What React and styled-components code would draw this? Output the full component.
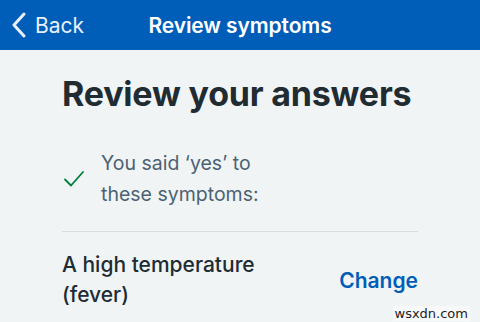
import React from 'react'
import styled, { createGlobalStyle } from 'styled-components'

const Global = createGlobalStyle`
  html, body { margin: 0; padding: 0; }
  body {
    width: 480px;
    height: 322px;
    overflow: hidden;
    background: #f0f4f5;
    font-family: Inter, "Noto Sans", sans-serif;
  }
`

const Page = styled.div`
  width: 480px;
  height: 322px;
  position: relative;
  background: #f0f4f5;
`

const Header = styled.header`
  height: 50px;
  background: #005eb8;
  display: grid;
  grid-template-columns: 1fr auto 1fr;
  align-items: center;
  color: #fff;
`

const Back = styled.div`
  display: flex;
  align-items: center;
  gap: 8px;
  padding-left: 11px;
  font-size: 21px;
  font-weight: 400;
  color: #e8f1fb;
  svg { display: block; }
`

const HeaderTitle = styled.div`
  font-size: 21px;
  font-weight: 600;
  letter-spacing: -0.1px;
`

const Content = styled.main`
  padding: 22px 62px 0 62px;
`

const Title = styled.h1`
  margin: 0;
  font-size: 34px;
  font-weight: 700;
  color: #212b32;
  letter-spacing: -0.2px;
  line-height: 44px;
`

const Summary = styled.div`
  display: flex;
  align-items: center;
  gap: 16px;
  margin-top: 32px;
  padding-bottom: 21px;
  border-bottom: 1px solid #d8dde0;
  svg { display: block; margin-left: 1px; }
`

const SummaryText = styled.p`
  margin: 0;
  font-size: 19.5px;
  line-height: 31px;
  color: #4c6272;
  font-weight: 400;
`

const Row = styled.div`
  display: flex;
  align-items: center;
  justify-content: space-between;
  padding-top: 18px;
`

const Symptom = styled.div`
  font-size: 21px;
  line-height: 30px;
  font-weight: 500;
  color: #212b32;
`

const ChangeLink = styled.a`
  font-size: 21px;
  font-weight: 600;
  color: #005eb8;
  text-decoration: none;
`

const Watermark = styled.span`
  position: absolute;
  right: 10px;
  bottom: 1px;
  font-size: 13px;
  color: #222;
  background: #f8f8f8;
  padding: 0 2px;
  font-family: "DejaVu Sans", sans-serif;
`

export default function App() {
  return (
    <Page>
      <Global />
      <Header>
        <Back>
          <svg width="16" height="26" viewBox="0 0 16 26">
            <path d="M13 2 L3 13 L13 24" fill="none" stroke="#e8f1fb" strokeWidth="3" strokeLinecap="round" strokeLinejoin="round" />
          </svg>
          Back
        </Back>
        <HeaderTitle>Review symptoms</HeaderTitle>
        <div />
      </Header>
      <Content>
        <Title>Review your answers</Title>
        <Summary>
          <svg width="22" height="18" viewBox="0 0 22 18">
            <path d="M2 9.5 L8 15.5 L20 2" fill="none" stroke="#007f3b" strokeWidth="1.8" strokeLinecap="round" strokeLinejoin="round" />
          </svg>
          <SummaryText>You said ‘yes’ to<br />these symptoms:</SummaryText>
        </Summary>
        <Row>
          <Symptom>A high temperature<br />(fever)</Symptom>
          <ChangeLink href="#">Change</ChangeLink>
        </Row>
      </Content>
      <Watermark>wsxdn.com</Watermark>
    </Page>
  )
}
